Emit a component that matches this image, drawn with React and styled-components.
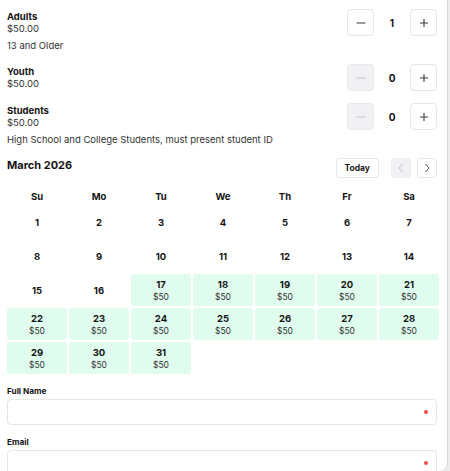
import React, { useState } from 'react'
import styled, { createGlobalStyle } from 'styled-components'

const GlobalStyle = createGlobalStyle`
  html, body {
    margin: 0;
    padding: 0;
    background: #ececec;
  }
  body {
    font-family: Inter, "Noto Sans", "Liberation Sans", sans-serif;
    color: #141414;
  }
`

const tickets = [
  { name: 'Adults', price: '$50.00', desc: '13 and Older', count: 1 },
  { name: 'Youth', price: '$50.00', count: 0 },
  { name: 'Students', price: '$50.00', desc: 'High School and College Students, must present student ID', count: 0 },
]

const weekDays = ['Su', 'Mo', 'Tu', 'We', 'Th', 'Fr', 'Sa']

const Minus = () => (
  <svg width="12" height="12" viewBox="0 0 12 12" fill="none" stroke="currentColor" strokeWidth="1.1">
    <path d="M1.5 6h9" />
  </svg>
)

const Plus = () => (
  <svg width="10" height="10" viewBox="0 0 10 10" fill="none" stroke="currentColor" strokeWidth="1.1">
    <path d="M1 5h8M5 1v8" />
  </svg>
)

const Chevron = ({ dir }) => (
  <svg width="8" height="10" viewBox="0 0 8 10" fill="none" stroke="currentColor" strokeWidth="1">
    {dir === 'left' ? <path d="M5.5 1L2 5l3.5 4" /> : <path d="M2.5 1L6 5 2.5 9" />}
  </svg>
)

export default function App() {
  const [counts, setCounts] = useState(tickets.map(t => t.count))

  const change = (i, d) => {
    const next = [...counts]
    next[i] = Math.max(0, next[i] + d)
    setCounts(next)
  }

  const days = []
  for (let i = 1; i <= 31; i++) days.push(i)

  return (
    <Panel>
      <GlobalStyle />
      <Tickets>
        {tickets.map((t, i) => (
          <Ticket key={t.name}>
            <TicketHead>
              <div>
                <TicketName>{t.name}</TicketName>
                <TicketPrice>{t.price}</TicketPrice>
              </div>
              <Stepper>
                <StepButton disabled={counts[i] === 0} onClick={() => change(i, -1)}><Minus /></StepButton>
                <Count>{counts[i]}</Count>
                <StepButton onClick={() => change(i, 1)}><Plus /></StepButton>
              </Stepper>
            </TicketHead>
            {t.desc && <TicketDesc>{t.desc}</TicketDesc>}
          </Ticket>
        ))}
      </Tickets>

      <CalendarHead>
        <MonthTitle>March 2026</MonthTitle>
        <NavGroup>
          <TodayButton>Today</TodayButton>
          <NavButton disabled><Chevron dir="left" /></NavButton>
          <NavButton><Chevron dir="right" /></NavButton>
        </NavGroup>
      </CalendarHead>

      <Grid>
        {weekDays.map(d => <WeekDay key={d}>{d}</WeekDay>)}
        {days.map(d => (
          <DayCell key={d} available={d >= 17}>
            <DayNum>{d}</DayNum>
            {d >= 17 && <DayPrice>$50</DayPrice>}
          </DayCell>
        ))}
      </Grid>

      <Field>
        <Label>Full Name</Label>
        <InputBox><Required /></InputBox>
      </Field>
      <Field>
        <Label>Email</Label>
        <InputBox><Required /></InputBox>
      </Field>
    </Panel>
  )
}

const Panel = styled.div`
  width: 448px;
  height: 471px;
  overflow: hidden;
  background: #fff;
  padding: 9px 10px 0 7px;
  box-sizing: border-box;
  border-right: 1px solid #d6d6d6;
  border-bottom-right-radius: 8px;
`

const Tickets = styled.div`
  display: flex;
  flex-direction: column;
  gap: 12px;
`

const Ticket = styled.div`
  display: flex;
  flex-direction: column;
`

const TicketHead = styled.div`
  display: flex;
  justify-content: space-between;
  align-items: center;
  height: 27px;
`

const TicketName = styled.div`
  font-size: 9.5px;
  font-weight: 700;
  line-height: 12px;
`

const TicketPrice = styled.div`
  font-size: 9.5px;
  line-height: 12px;
  color: #333;
`

const TicketDesc = styled.div`
  font-size: 9.5px;
  line-height: 13px;
  margin-top: 3px;
  color: #333;
`

const Stepper = styled.div`
  display: flex;
  align-items: center;
`

const StepButton = styled.button`
  width: 27px;
  height: 27px;
  padding: 0;
  display: flex;
  align-items: center;
  justify-content: center;
  border: 1px solid ${p => p.disabled ? '#e9e9ec' : '#e6e6e6'};
  border-radius: 4px;
  background: ${p => p.disabled ? '#f1f1f3' : '#fff'};
  color: ${p => p.disabled ? '#c4c4c8' : '#3a3a3a'};
  box-sizing: border-box;
  cursor: pointer;
`

const Count = styled.div`
  width: 36px;
  text-align: center;
  font-size: 10px;
  font-weight: 700;
`

const CalendarHead = styled.div`
  display: flex;
  justify-content: space-between;
  align-items: flex-start;
  margin-top: 11px;
`

const MonthTitle = styled.div`
  font-size: 11px;
  font-weight: 700;
  line-height: 16px;
`

const NavGroup = styled.div`
  display: flex;
  align-items: center;
  gap: 6px;
  margin-top: 1px;
`

const TodayButton = styled.button`
  height: 20px;
  padding: 0 8px;
  margin-right: 6px;
  font-family: inherit;
  font-size: 8.5px;
  font-weight: 700;
  color: #1a1a1a;
  background: #fff;
  border: 1px solid #e6e6e6;
  border-radius: 3px;
  cursor: pointer;
`

const NavButton = styled.button`
  width: 20px;
  height: 20px;
  padding: 0;
  display: flex;
  align-items: center;
  justify-content: center;
  border: 1px solid ${p => p.disabled ? '#ececee' : '#e6e6e6'};
  border-radius: 3px;
  background: ${p => p.disabled ? '#f1f1f3' : '#fff'};
  color: ${p => p.disabled ? '#b8b8bc' : '#555'};
  box-sizing: border-box;
`

const Grid = styled.div`
  display: grid;
  grid-template-columns: repeat(7, 60px);
  grid-auto-rows: 32px;
  grid-template-rows: 15px;
  gap: 2px;
  margin-top: 11px;
`

const WeekDay = styled.div`
  font-size: 9.5px;
  font-weight: 700;
  text-align: center;
  line-height: 15px;
`

const DayCell = styled.div`
  display: flex;
  flex-direction: column;
  align-items: center;
  justify-content: center;
  border-radius: 3px;
  background: ${p => p.available ? '#e0fcee' : 'transparent'};
`

const DayNum = styled.div`
  font-size: 9.5px;
  font-weight: 700;
  line-height: 13px;
`

const DayPrice = styled.div`
  font-size: 8.5px;
  line-height: 12px;
  color: #333;
`

const Field = styled.div`
  margin-top: 11px;
  & + & { margin-top: 11px; }
`

const Label = styled.div`
  font-size: 8.2px;
  font-weight: 700;
  line-height: 12px;
  margin-bottom: 2px;
`

const InputBox = styled.div`
  position: relative;
  height: 26px;
  border: 1px solid #e6e6e6;
  border-radius: 4px;
  box-sizing: border-box;
  background: #fff;
`

const Required = styled.span`
  position: absolute;
  right: 8px;
  top: 50%;
  width: 4px;
  height: 4px;
  margin-top: -2px;
  border-radius: 50%;
  background: #f04a4a;
`
